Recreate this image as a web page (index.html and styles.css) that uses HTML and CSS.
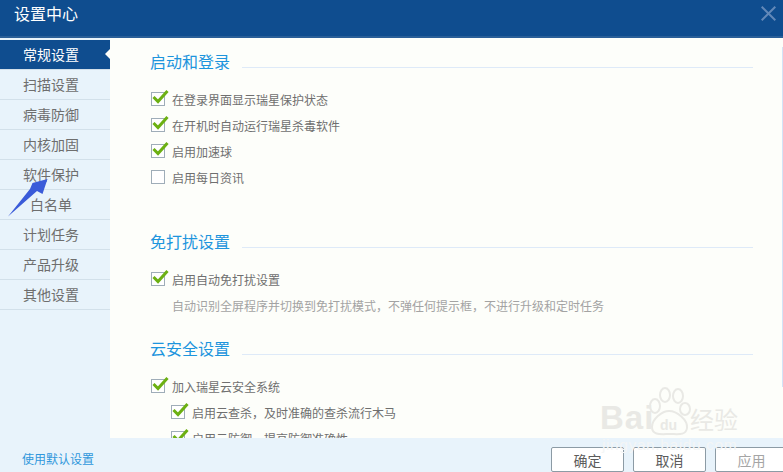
FILE: index.html
```html
<!DOCTYPE html>
<html lang="zh">
<head>
<meta charset="utf-8">
<title>设置中心</title>
<link rel="stylesheet" href="styles.css">
</head>
<body>
<div class="window">
  <header class="titlebar">
    <span class="title">设置中心</span>
    <svg class="close" width="15" height="15" viewBox="0 0 15 15"><path d="M0.7 0.7L14.3 14.3M14.3 0.7L0.7 14.3" stroke="#6288b8" stroke-width="2" fill="none"/></svg>
  </header>
  <div class="main">
    <nav class="sidebar">
      <div class="nav-item active">常规设置</div>
      <div class="nav-item">扫描设置</div>
      <div class="nav-item">病毒防御</div>
      <div class="nav-item">内核加固</div>
      <div class="nav-item">软件保护</div>
      <div class="nav-item">白名单</div>
      <div class="nav-item">计划任务</div>
      <div class="nav-item">产品升级</div>
      <div class="nav-item">其他设置</div>
    </nav>
    <section class="content">
      <div class="heading"><h2>启动和登录</h2><span class="rule"></span></div>
      <div class="rows">
        <label class="row"><span class="box on"><svg class="tick" width="17" height="15" viewBox="0 0 17 15"><path d="M1.5 8L6 12.5L15.5 2" stroke="#6cb012" stroke-width="3" fill="none"/></svg></span>在登录界面显示瑞星保护状态</label>
        <label class="row"><span class="box on"><svg class="tick" width="17" height="15" viewBox="0 0 17 15"><path d="M1.5 8L6 12.5L15.5 2" stroke="#6cb012" stroke-width="3" fill="none"/></svg></span>在开机时自动运行瑞星杀毒软件</label>
        <label class="row"><span class="box on"><svg class="tick" width="17" height="15" viewBox="0 0 17 15"><path d="M1.5 8L6 12.5L15.5 2" stroke="#6cb012" stroke-width="3" fill="none"/></svg></span>启用加速球</label>
        <label class="row"><span class="box"></span>启用每日资讯</label>
      </div>
      <div class="heading second"><h2>免打扰设置</h2><span class="rule"></span></div>
      <div class="rows">
        <label class="row"><span class="box on"><svg class="tick" width="17" height="15" viewBox="0 0 17 15"><path d="M1.5 8L6 12.5L15.5 2" stroke="#6cb012" stroke-width="3" fill="none"/></svg></span>启用自动免打扰设置</label>
        <p class="desc">自动识别全屏程序并切换到免打扰模式，不弹任何提示框，不进行升级和定时任务</p>
      </div>
      <div class="heading third"><h2>云安全设置</h2><span class="rule"></span></div>
      <div class="rows">
        <label class="row"><span class="box on"><svg class="tick" width="17" height="15" viewBox="0 0 17 15"><path d="M1.5 8L6 12.5L15.5 2" stroke="#6cb012" stroke-width="3" fill="none"/></svg></span>加入瑞星云安全系统</label>
        <label class="row sub"><span class="box on"><svg class="tick" width="17" height="15" viewBox="0 0 17 15"><path d="M1.5 8L6 12.5L15.5 2" stroke="#6cb012" stroke-width="3" fill="none"/></svg></span>启用云查杀，及时准确的查杀流行木马</label>
        <label class="row sub"><span class="box on"><svg class="tick" width="17" height="15" viewBox="0 0 17 15"><path d="M1.5 8L6 12.5L15.5 2" stroke="#6cb012" stroke-width="3" fill="none"/></svg></span>启用云防御，提高防御准确性</label>
      </div>
      <span class="scrollbar"></span>
    </section>
  </div>
  <footer class="footer">
    <a class="defaults">使用默认设置</a>
    <div class="buttons">
      <button class="btn">确定</button>
      <button class="btn">取消</button>
      <button class="btn disabled">应用</button>
    </div>
  </footer>
  <svg class="arrow" width="50" height="50" viewBox="0 0 50 50"><path d="M8 44.500L30 17L32.500 11L47.500 7L42.500 22L37 19Z" fill="#3a5bd9"/></svg>
  <div class="watermark">
    <span class="wm-bai">Bai</span>
    <svg class="wm-paw" width="44" height="52" viewBox="0 0 44 52">
      <g fill="none" stroke="#e9e9e5" stroke-width="2">
        <ellipse cx="8" cy="19" rx="5" ry="7"/>
        <ellipse cx="18" cy="8" rx="5" ry="7"/>
        <ellipse cx="31" cy="9" rx="5" ry="7"/>
        <ellipse cx="38" cy="22" rx="5" ry="6"/>
        <path d="M5 40C5 32 15 24 22 24C30 24 41 33 40 41C39 49 30 47 23 47C15 47 5 49 5 40Z"/>
      </g>
      <text x="13" y="43" class="wm-du">du</text>
    </svg>
    <span class="wm-jy">经验</span>
    <span class="wm-url">jingyan.baidu.com</span>
  </div>
</div>
</body>
</html>
```
FILE: styles.css
```css
* { box-sizing: border-box; }
html, body { margin: 0; padding: 0; }
body {
  width: 783px;
  height: 472px;
  overflow: hidden;
  font-family: "Noto Sans CJK SC", "Liberation Sans", sans-serif;
  font-size: 12px;
  color: #6f6f6f;
}
.window {
  position: relative;
  display: flex;
  flex-direction: column;
  width: 783px;
  height: 472px;
  overflow: hidden;
  background: #e8f3fb;
}
.titlebar {
  flex: none;
  height: 38px;
  display: flex;
  align-items: center;
  justify-content: space-between;
  padding: 0 7px 10px 14px;
  background: #0f4d8f;
  border-bottom: 2px solid #2a5f98;
}
.title { color: #fff; font-size: 16px; line-height: 22px; }
.close { margin-top: 1px; }
.main { flex: 1; display: flex; min-height: 0; }
.sidebar {
  flex: none;
  width: 110px;
  padding-top: 2px;
  background: #e8f3fb;
}
.nav-item {
  position: relative;
  height: 30px;
  padding-right: 8px;
  line-height: 29px;
  text-align: center;
  font-size: 14px;
  color: #6e6e6e;
  border-bottom: 1px solid #d2e0ea;
}
.nav-item.active { background: #0f4d8f; color: #fff; border-bottom-color: #d2e0ea; }
.nav-item.active::after {
  content: "";
  position: absolute;
  right: 0;
  top: 9px;
  border: 5px solid transparent;
  border-right-color: #fdfefa;
  border-left-width: 0;
}
.content {
  position: relative;
  flex: 1;
  min-width: 0;
  overflow: hidden;
  padding: 11px 0 0 40px;
  background: #fdfefa;
}
.heading { display: flex; align-items: flex-end; height: 24px; }
.heading h2 {
  margin: 0;
  font-size: 16px;
  font-weight: 400;
  line-height: 24px;
  color: #1d95dd;
}
.rule {
  width: 511px;
  height: 1px;
  margin: 0 0 5px 12px;
  background: #deeaf8;
}
.heading.second { margin-top: 39px; }
.heading.third { margin-top: 16px; }
.rows { margin-top: 13px; }
.row {
  display: flex;
  align-items: center;
  height: 26px;
  color: #6f6f6f;
}
.row.sub { padding-left: 20px; }
.box {
  position: relative;
  flex: none;
  width: 14px;
  height: 14px;
  margin: 0 7px 0 1px;
  background: #fff;
  border: 1px solid #9fadb8;
}
.tick { position: absolute; left: 0; top: -4px; }
.desc {
  margin: 0;
  height: 28px;
  line-height: 28px;
  padding-left: 22px;
  color: #a3a3a3;
}
.scrollbar {
  position: absolute;
  right: 0;
  top: 9px;
  width: 1px;
  height: 340px;
  background: #d3e3f7;
}
.footer {
  flex: none;
  height: 34px;
  display: flex;
  justify-content: space-between;
  background: #e8f3fb;
}
.defaults {
  margin: 13px 0 0 22px;
  line-height: 16px;
  color: #2f97dc;
}
.buttons { display: flex; gap: 9px; padding-top: 9px; margin-right: -5px; }
.btn {
  width: 73px;
  height: 25px;
  padding: 0;
  background: #fff;
  border: 1px solid #8c9ba5;
  border-radius: 2px;
  font: 14px "Noto Sans CJK SC", sans-serif;
  color: #5c5c5c;
}
.btn.disabled { color: #a5a5a5; }
.arrow { position: absolute; left: 0; top: 172px; }
.watermark {
  position: absolute;
  left: 600px;
  top: 386px;
  width: 145px;
  height: 70px;
  color: #e9e9e5;
}
.wm-bai {
  position: absolute;
  left: 0;
  top: 12px;
  font: 700 33px/40px "Liberation Sans", sans-serif;
  letter-spacing: 1px;
}
.wm-paw { position: absolute; left: 47px; top: 1px; }
.wm-du { font: 700 14px "Liberation Sans", sans-serif; fill: #e9e9e5; }
.wm-jy {
  position: absolute;
  left: 90px;
  top: 18px;
  font-size: 24px;
  line-height: 30px;
}
.wm-url {
  position: absolute;
  left: 2px;
  top: 49px;
  font: 15.5px/20px "Liberation Sans", sans-serif;
  letter-spacing: 0.6px;
  color: #f4f6f6;
}
```
